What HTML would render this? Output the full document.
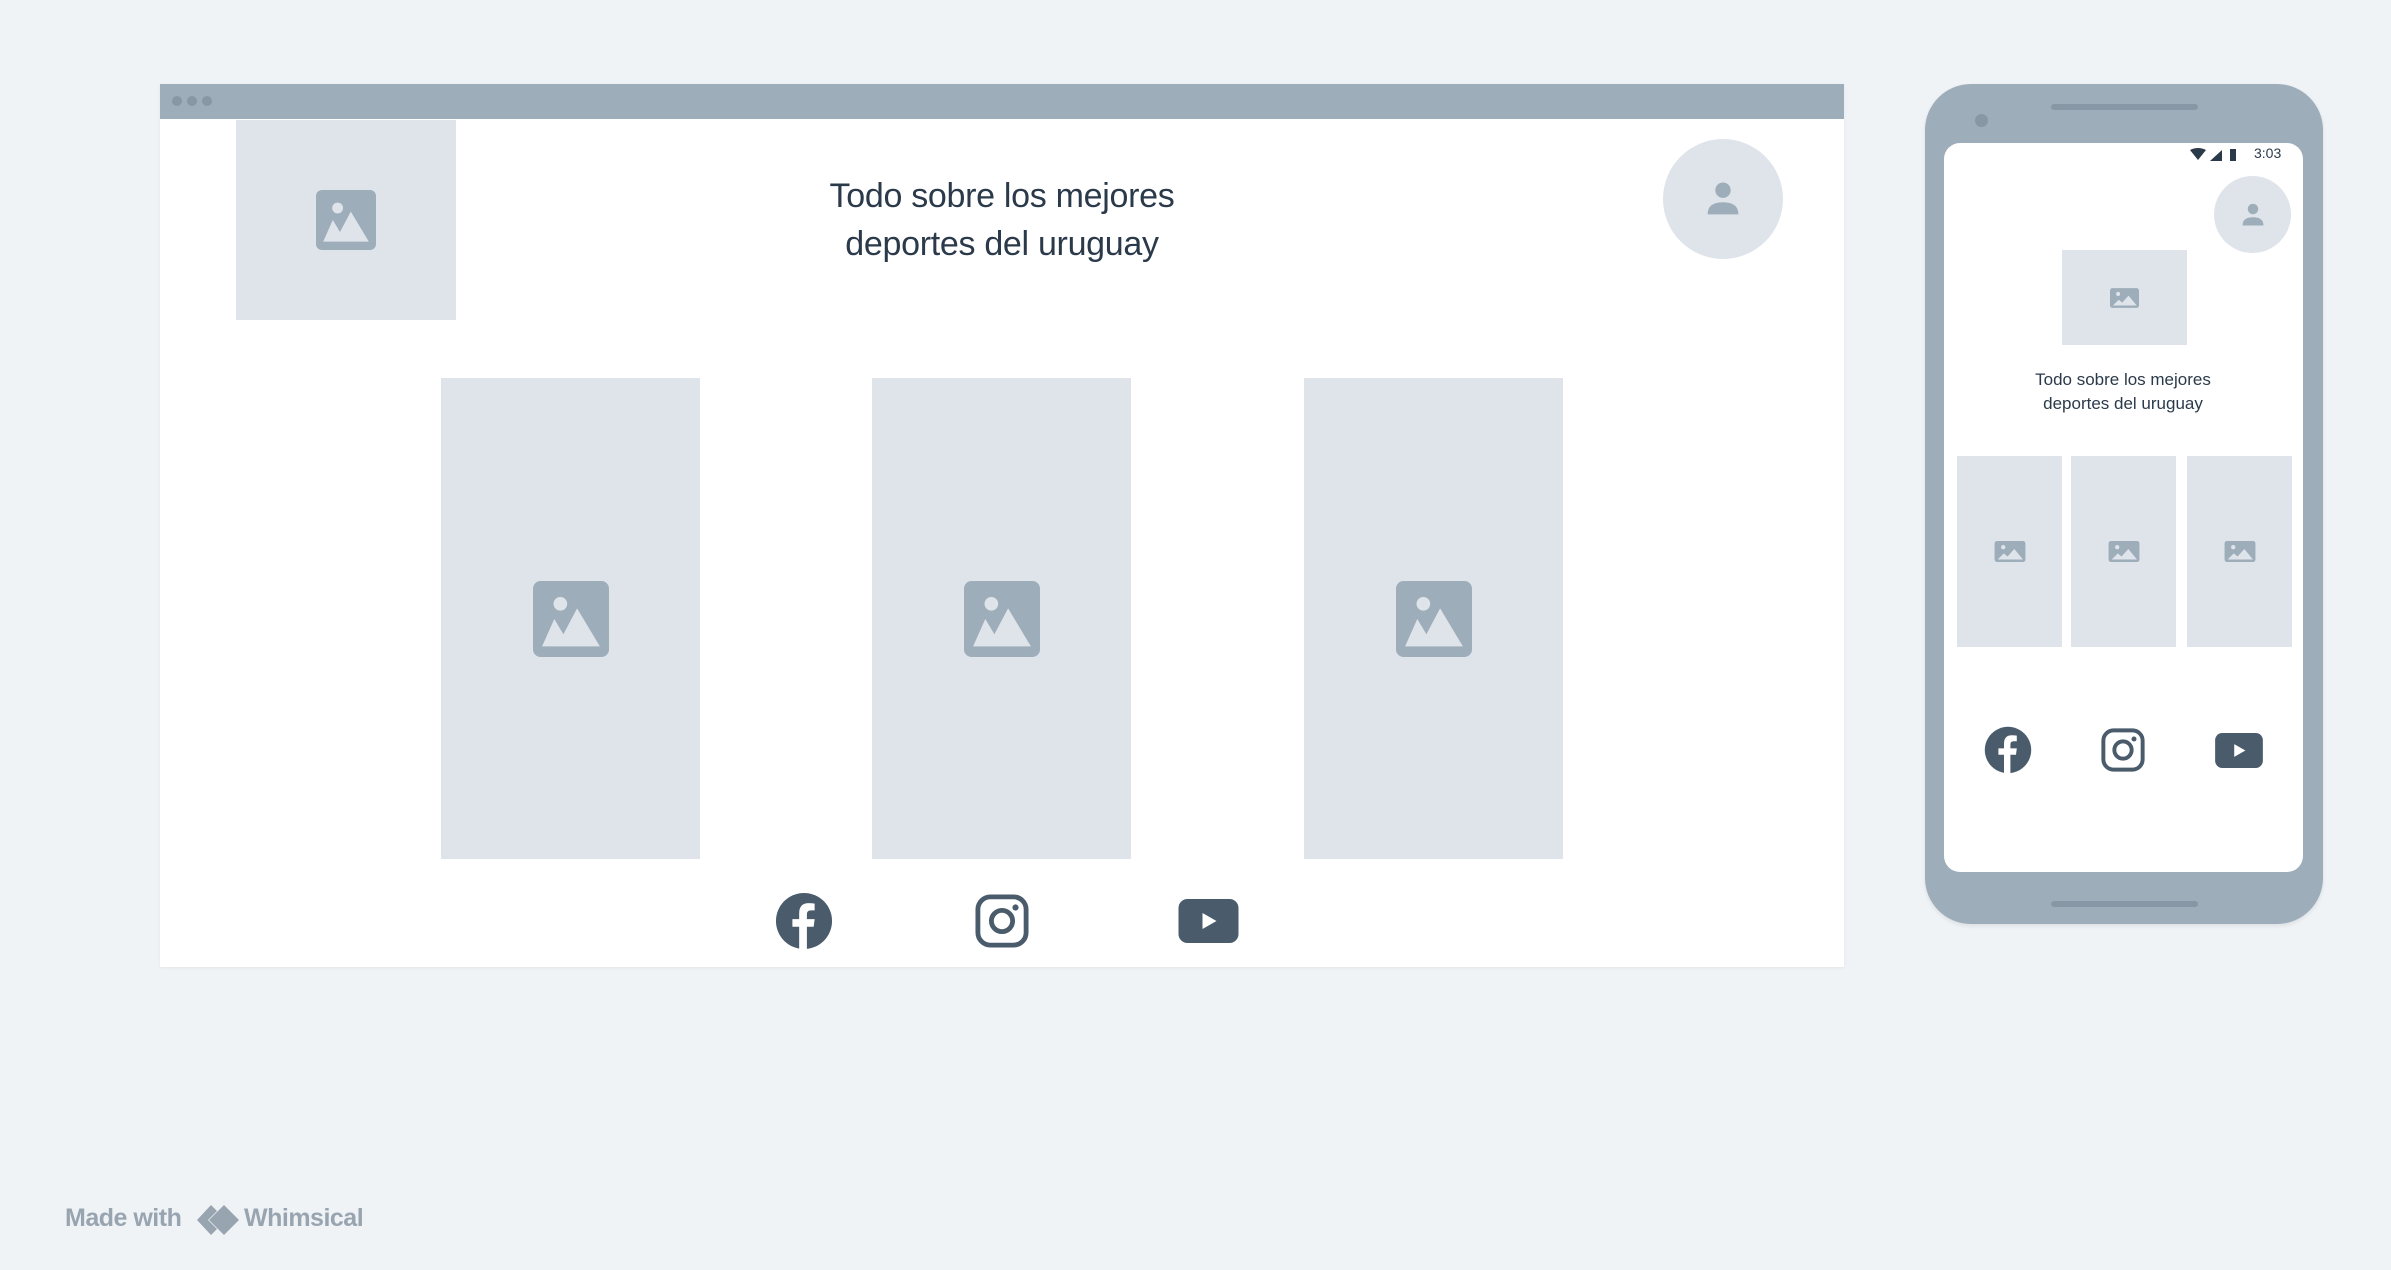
<!DOCTYPE html>
<html><head><meta charset="utf-8">
<style>
*{margin:0;padding:0;box-sizing:border-box}
body{width:2391px;height:1270px;background:#eff3f6;position:relative;overflow:hidden;font-family:"Liberation Sans",sans-serif}
.abs{position:absolute}
.ph{background:#dfe4eb;position:absolute;display:flex;align-items:center;justify-content:center}
</style></head><body>
<svg width="0" height="0" style="position:absolute">
<defs>
<symbol id="img" viewBox="0 0 50 50"><rect x="0" y="0" width="50" height="50" rx="5" fill="#9eadba"/><circle cx="18" cy="15" r="4.5" fill="#dfe4eb"/><path d="M6 43 L14 25 L20 35 L29 18 L44 43 Z" fill="#dfe4eb"/></symbol>
<symbol id="imgw" viewBox="0 0 50 34"><rect x="0" y="0" width="50" height="34" rx="4" fill="#9eadba"/><circle cx="14" cy="10" r="3.5" fill="#dfe4eb"/><path d="M5 30 L15 20 L21 25 L32 13 L46 30 Z" fill="#dfe4eb"/></symbol>
<symbol id="user" viewBox="0 0 40 40"><circle cx="20" cy="12" r="7" fill="#9eadba"/><path d="M6 34 Q6 23 20 23 Q34 23 34 34 Z" fill="#9eadba"/></symbol>
<symbol id="fb" viewBox="0 0 60 60"><circle cx="30" cy="30" r="29" fill="#4a5b6b"/><path d="M33 60 V36 H40 L41 28 H33 V23 Q33 19 37 19 H41 V12 Q38 11.5 35 11.5 Q25 11.5 25 22 V28 H18 V36 H25 V60 Z" fill="#fff"/></symbol>
<symbol id="ig" viewBox="0 0 56 56"><rect x="3" y="3" width="50" height="50" rx="13" fill="none" stroke="#4a5b6b" stroke-width="5"/><circle cx="28" cy="28" r="11" fill="none" stroke="#4a5b6b" stroke-width="5"/><circle cx="42" cy="14" r="3.2" fill="#4a5b6b"/></symbol>
<symbol id="yt" viewBox="0 0 60 44"><rect x="0" y="0" width="60" height="44" rx="9" fill="#4a5b6b"/><path d="M24 14 L38 22 L24 30 Z" fill="#fff"/></symbol>
</defs></svg>

<!-- desktop -->
<div class="abs" style="left:160px;top:84px;width:1684px;height:883px;background:#fff;box-shadow:0 1px 3px rgba(0,0,0,.06)"></div>
<div class="abs" style="left:160px;top:84px;width:1684px;height:35px;background:#9eadba"></div>
<div class="abs" style="left:172px;top:96px;width:10px;height:10px;border-radius:50%;background:#8797a5"></div>
<div class="abs" style="left:187px;top:96px;width:10px;height:10px;border-radius:50%;background:#8797a5"></div>
<div class="abs" style="left:202px;top:96px;width:10px;height:10px;border-radius:50%;background:#8797a5"></div>
<div class="ph" style="left:236px;top:120px;width:220px;height:200px"><svg width="60" height="60"><use href="#img"/></svg></div>
<div class="abs" style="left:702px;top:172px;width:600px;text-align:center;font-size:34px;line-height:48px;color:#2b3a4a;letter-spacing:-0.3px">Todo sobre los mejores<br>deportes del uruguay</div>
<div class="abs" style="left:1663px;top:139px;width:120px;height:120px;border-radius:50%;background:#dfe4eb;display:flex;align-items:center;justify-content:center"><svg width="44" height="44"><use href="#user"/></svg></div>
<div class="ph" style="left:441px;top:378px;width:259px;height:481px"><svg width="76" height="76"><use href="#img"/></svg></div>
<div class="ph" style="left:872px;top:378px;width:259px;height:481px"><svg width="76" height="76"><use href="#img"/></svg></div>
<div class="ph" style="left:1304px;top:378px;width:259px;height:481px"><svg width="76" height="76"><use href="#img"/></svg></div>
<svg class="abs" style="left:775px;top:892px" width="58" height="58"><use href="#fb"/></svg>
<svg class="abs" style="left:975px;top:894px" width="54" height="54"><use href="#ig"/></svg>
<svg class="abs" style="left:1178px;top:899px" width="61" height="44"><use href="#yt"/></svg>

<!-- phone -->
<div class="abs" style="left:1925px;top:84px;width:398px;height:840px;border-radius:46px;background:#9eadba;box-shadow:0 2px 4px rgba(0,0,0,.08)"></div>
<div class="abs" style="left:2051px;top:104px;width:147px;height:6px;border-radius:3px;background:#8797a5"></div>
<div class="abs" style="left:2051px;top:901px;width:147px;height:6px;border-radius:3px;background:#8797a5"></div>
<div class="abs" style="left:1975px;top:114px;width:13px;height:13px;border-radius:50%;background:#8797a5"></div>
<div class="abs" style="left:1944px;top:143px;width:359px;height:729px;border-radius:16px;background:#fff"></div>
<svg class="abs" style="left:2190px;top:147px" width="52" height="16" viewBox="0 0 52 16"><path d="M0 3 Q8 -1 16 3 L8 13 Z" fill="#2b3a4a"/><path d="M20 14 L32 3 L32 14 Z" fill="#2b3a4a"/><rect x="40" y="2" width="6" height="12" fill="#2b3a4a"/></svg>
<div class="abs" style="left:2254px;top:145px;font-size:14px;color:#2b3a4a">3:03</div>
<div class="abs" style="left:2214px;top:176px;width:77px;height:77px;border-radius:50%;background:#dfe4eb;display:flex;align-items:center;justify-content:center"><svg width="30" height="30"><use href="#user"/></svg></div>
<div class="ph" style="left:2062px;top:250px;width:125px;height:95px"><svg width="29" height="20"><use href="#imgw"/></svg></div>
<div class="abs" style="left:1973px;top:368px;width:300px;text-align:center;font-size:17px;line-height:24px;color:#2b3a4a">Todo sobre los mejores<br>deportes del uruguay</div>
<div class="ph" style="left:1957px;top:456px;width:105px;height:191px"><svg width="32" height="21"><use href="#imgw"/></svg></div>
<div class="ph" style="left:2071px;top:456px;width:105px;height:191px"><svg width="32" height="21"><use href="#imgw"/></svg></div>
<div class="ph" style="left:2187px;top:456px;width:105px;height:191px"><svg width="32" height="21"><use href="#imgw"/></svg></div>
<svg class="abs" style="left:1984px;top:726px" width="48" height="48"><use href="#fb"/></svg>
<svg class="abs" style="left:2101px;top:728px" width="44" height="44"><use href="#ig"/></svg>
<svg class="abs" style="left:2214px;top:733px" width="50" height="35"><use href="#yt"/></svg>

<!-- footer -->
<div class="abs" style="left:65px;top:1204px;font-size:25px;font-weight:bold;color:#98a4b0;letter-spacing:-0.5px">Made with</div>
<svg class="abs" style="left:195px;top:1203px" width="46" height="34" viewBox="0 0 46 34"><path d="M16 2 L2 17 L16 32 L22 26 L13 17 L22 8 Z" fill="#98a4b0"/><path d="M29 2 L44 17 L29 32 L14 17 Z" fill="#98a4b0"/></svg>
<div class="abs" style="left:244px;top:1204px;font-size:25px;font-weight:bold;color:#98a4b0;letter-spacing:-0.5px">Whimsical</div>
</body></html>
